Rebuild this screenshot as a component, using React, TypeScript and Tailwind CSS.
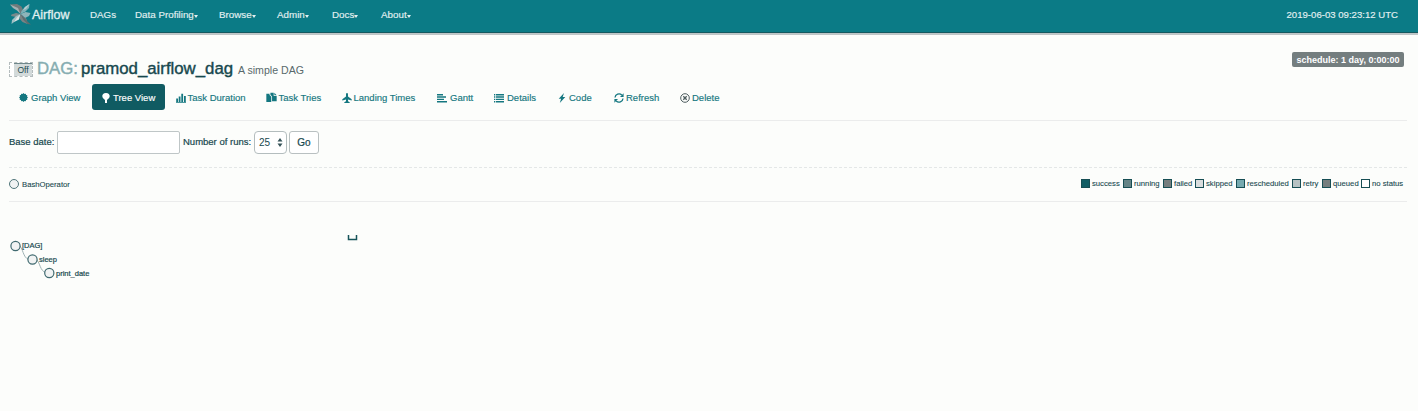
import type { ReactNode } from 'react';

function Pinwheel() {
  return (
    <svg className="h-[22px] w-[23px] shrink-0" viewBox="0 0 23 22">
      <path d="M1 1.500L8 1l4.500 2.500L14 7l-2.500 4L8 6 3 3.500z" fill="#717b7c" />
      <path d="M1 1.500L4 5l4 2.500 3.500 3.500L9 5z" fill="#a3b1b3" />
      <path d="M20.500 1L16 4l-3.500 4-1 3 5-2.500L20 5z" fill="#7fb0b6" />
      <path d="M20.500 1L16 4l-2 3 3-1z" fill="#b5cccf" />
      <path d="M11.500 11l5-2 5 1-1.500 3-4 2z" fill="#8eb5ba" />
      <path d="M11.500 11L7 10l-4.500 1.500L2 13l5 1z" fill="#79898b" />
      <path d="M11.500 11L7 13l-4 4-.5 4L7 17.500z" fill="#9fc0c4" />
      <path d="M11.500 11L8 14.500 5 19l5-2.500z" fill="#dde3e3" />
      <path d="M11.500 11l-1 4.500 3 3.500 5 2-1-5z" fill="#7a8485" />
      <path d="M11.500 11l4 4 3.500 4 3 2.500-3.500-.5-4-4z" fill="#5d6d6f" />
    </svg>
  );
}

function Svg({ children, className }: { children: ReactNode; className: string }) {
  return (
    <svg viewBox="0 0 10 10" fill="currentColor" className={className}>
      {children}
    </svg>
  );
}

const menus = [
  { label: 'DAGs', caret: false, box: 'w-[45px]' },
  { label: 'Data Profiling', caret: true, box: 'w-[84px]' },
  { label: 'Browse', caret: true, box: 'w-[58px]' },
  { label: 'Admin', caret: true, box: 'w-[55px]' },
  { label: 'Docs', caret: true, box: 'w-[49px]' },
  { label: 'About', caret: true, box: 'w-[50px]' },
];

const tabs: { label: string; box: string; icon: ReactNode }[] = [
  {
    label: 'Graph View',
    box: 'w-[82.500px] pl-[10px]',
    icon: (
      <Svg className="mr-[3px] size-[9px]">
        <path d="M5 0l1.1 1.1L7.5.7l.4 1.4 1.4.4-.4 1.4L10 5 8.9 6.1l.4 1.4-1.4.4-.4 1.4-1.4-.4L5 10 3.9 8.9l-1.4.4-.4-1.4-1.4-.4.4-1.4L0 5l1.1-1.1L.7 2.500l1.400-.4.4-1.400 1.400.4z" />
      </Svg>
    ),
  },
  {
    label: 'Tree View',
    box: 'w-[73px] pl-[9.500px]',
    icon: (
      <Svg className="mr-[2px] size-[10px]">
        <path d="M5 0C7.600 0 8.700 1.500 8.700 3.100 8.700 5 7.400 6 6 6.900V10H4V6.900C2.600 6 1.300 5 1.300 3.100 1.300 1.500 2.400 0 5 0z" />
      </Svg>
    ),
  },
  {
    label: 'Task Duration',
    box: 'w-[92px] pl-[11px]',
    icon: (
      <Svg className="mr-[2px] size-[10px]">
        <path d="M.2 5.500h1.800V9H.2zM2.700 3.500h1.800V9H2.700zM5.300 .8h1.800V9H5.300zM8 3h1.800v6H8zM0 9h10v.7H0z" />
      </Svg>
    ),
  },
  {
    label: 'Task Tries',
    box: 'w-[75px] pl-[9px]',
    icon: (
      <Svg className="mr-[2px] size-[11px]">
        <path d="M.3 1.500h2.900v1.300l1.600 1.600V9H.3zM4 .7h3v2.900h2.700V8.300H5.500V4L4 2.500zM7.600.7l2.100 2.300H7.600z" />
      </Svg>
    ),
  },
  {
    label: 'Landing Times',
    box: 'w-[95.500px] pl-[10px]',
    icon: (
      <Svg className="mr-[2px] size-[10px]">
        <path d="M5 0c.7 0 1 .7 1 1.400v2.200l3.700 2.700v1.300L6 6.600v1.600l1.700 1v.8H2.300v-.8l1.700-1V6.600L.3 7.600V6.300L4 3.600V1.400C4 .7 4.300 0 5 0z" />
      </Svg>
    ),
  },
  {
    label: 'Gantt',
    box: 'w-[57px] pl-[10px]',
    icon: (
      <Svg className="mr-[3px] size-[10px]">
        <path d="M0 1h6v1.400H0zM0 3.300h9v1.400H0zM0 5.700h7v1.400H0zM0 8.100h10v1.400H0z" />
      </Svg>
    ),
  },
  {
    label: 'Details',
    box: 'w-[63px] pl-[10px]',
    icon: (
      <Svg className="mr-[3px] size-[10px]">
        <path d="M0 1h1.300v1.400H0zM2 1h8v1.400H2zM0 3.300h1.300v1.400H0zM2 3.300h8v1.400H2zM0 5.700h1.300v1.400H0zM2 5.700h8v1.400H2zM0 8.100h1.300v1.400H0zM2 8.100h8v1.400H2z" />
      </Svg>
    ),
  },
  {
    label: 'Code',
    box: 'w-[56.500px] pl-[9.500px]',
    icon: (
      <Svg className="mr-[2.500px] size-[10px]">
        <path d="M7 0L1.700 5.700h2.400L2.800 10l5.500-5.900H5.700z" />
      </Svg>
    ),
  },
  {
    label: 'Refresh',
    box: 'w-[66.500px] pl-[10px]',
    icon: (
      <Svg className="mr-[2.500px] size-[10px]">
        <path d="M1 4.500A4 4 0 0 1 7.800 2M9 5.500A4 4 0 0 1 2.200 8" fill="none" stroke="currentColor" strokeWidth="1.300" />
        <path d="M9.600.2v3.800H6zM.4 9.800V6H4z" />
      </Svg>
    ),
  },
  {
    label: 'Delete',
    box: 'w-[60px] pl-[9.500px]',
    icon: (
      <Svg className="mr-[2.500px] size-[10px] text-[#4d5c5e]">
        <circle cx="5" cy="5" r="4.300" fill="none" stroke="currentColor" strokeWidth="1" />
        <path d="M3.300 3.300l3.400 3.400M6.700 3.300L3.300 6.700" stroke="currentColor" strokeWidth="1.300" />
      </Svg>
    ),
  },
];

const statuses = [
  { label: 'success', box: 'w-[42px]', fill: 'bg-[#125e65]' },
  { label: 'running', box: 'w-[40px]', fill: 'bg-[#668486]' },
  { label: 'failed', box: 'w-[32px]', fill: 'bg-[#777e7e]' },
  { label: 'skipped', box: 'w-[41px]', fill: 'bg-[#d9dddd]' },
  { label: 'rescheduled', box: 'w-[56px]', fill: 'bg-[#76aab0]' },
  { label: 'retry', box: 'w-[30px]', fill: 'bg-[#b7c2c3]' },
  { label: 'queued', box: 'w-[39px]', fill: 'bg-[#777e7e]' },
  { label: 'no status', box: 'w-[42px]', fill: 'bg-white' },
];

export default function App() {
  return (
    <div className="h-[411px] overflow-hidden bg-[#fcfdfb] font-['Liberation_Sans',Arial,sans-serif] text-[9.500px] leading-[12px] text-[#17484e]">
      <nav className="flex h-[35px] items-start border-b-2 border-[#bfc6c7] bg-[#0b7b86]">
        <div className="flex h-[33px] w-full items-start border-b border-[#155960] pt-[3px] pl-[9px] text-[9.800px] text-[#e2f0f1] [-webkit-text-stroke:0.15px]">
          <Pinwheel />
          <span className="mt-[5px] w-[58px] text-[12.500px] leading-[14px] [-webkit-text-stroke:0.3px]">Airflow</span>
          {menus.map((m) => (
            <span key={m.label} className={`mt-[6px] flex shrink-0 items-center whitespace-nowrap ${m.box}`}>
              {m.label}
              {m.caret && <span className="mt-[2px] border-x-[2.500px] border-t-[3px] border-x-transparent" />}
            </span>
          ))}
          <span className="mt-[6px] mr-[20px] ml-auto text-[9.600px] whitespace-nowrap">2019-06-03 09:23:12 UTC</span>
        </div>
      </nav>

      <div className="pr-[11px] pl-[9px]">
        <header className="flex h-[49px] justify-between">
          <div className="flex pt-[24px]">
            <span className="mt-[3px] flex h-[15px] w-[24px] shrink-0 items-center border border-dashed border-[#b4bcbd] bg-white pl-[4px]">
              <span className="flex h-[13px] w-[18px] items-center justify-center border-t border-[#70888b] bg-[#d3dada] pb-px text-[8.500px] text-[#234c50]">Off</span>
            </span>
            <h1 className="ml-[4px] text-[16.800px] leading-[20px] whitespace-nowrap [-webkit-text-stroke:0.4px]">
              <span className="inline-block w-[44px] text-[#86adb1]">DAG:</span>
              <span className="inline-block w-[157px]">pramod_airflow_dag</span>
            </h1>
            <span className="mt-[5px] text-[10.600px] leading-[13px] whitespace-nowrap text-[#58696b]">A simple DAG</span>
          </div>
          <span className="mt-[17px] mr-[3px] flex h-[15px] w-[112px] items-center justify-center rounded-[2px] bg-[#747e7f] text-[9px] font-bold whitespace-nowrap text-white">
            schedule: 1 day, 0:00:00
          </span>
        </header>

        <ul className="flex h-[37px] border-b border-[#ebecec]">
          {tabs.map((t) => (
            <li
              key={t.label}
              className={`flex h-[26px] shrink-0 items-center pt-px whitespace-nowrap [-webkit-text-stroke:0.15px] ${t.box} ${
                t.label === 'Tree View' ? 'rounded-[3px] bg-[#105b62] text-white' : 'text-[#147780]'
              }`}
            >
              {t.icon}
              {t.label}
            </li>
          ))}
        </ul>

        <form className="flex h-[47px] border-b border-dashed border-[#e4e7e7] pt-[10px]">
          <label className="mt-[5px] w-[48px] whitespace-nowrap [-webkit-text-stroke:0.2px]">Base date:</label>
          <span className="h-[23px] w-[123px] rounded-[2px] border border-[#bfc6c7] bg-white" />
          <label className="mt-[5px] ml-[3px] w-[71px] whitespace-nowrap [-webkit-text-stroke:0.2px]">Number of runs:</label>
          <span className="flex h-[23px] w-[33px] items-center rounded-[4px] border border-[#b4bdbe] bg-white pl-[4px] text-[10px]">
            <span className="w-[18px]">25</span>
            <svg className="h-[9px] w-[6px]" viewBox="0 0 6 9" fill="#355257">
              <path d="M3 0l2.500 3.500h-5zM3 9L.5 5.500h5z" />
            </svg>
          </span>
          <button type="button" className="ml-[2px] h-[23px] w-[30px] rounded-[3px] border border-[#b9c0c1] bg-white pt-px text-[10px] [-webkit-text-stroke:0.2px]">
            Go
          </button>
        </form>

        <div className="flex h-[34px] items-start border-b border-[#ebecec] text-[7.700px] leading-[9px] [-webkit-text-stroke:0.1px]">
          <span className="mt-[11px] mr-[3px] size-[10px] rounded-full border border-[#50757a] bg-[#f1f3f3]" />
          <span className="mt-[12px]">BashOperator</span>
          <div className="mt-[11px] ml-auto flex h-[9px] w-[326px] items-center">
            {statuses.map((s) => (
              <span key={s.label} className={`flex shrink-0 items-center whitespace-nowrap ${s.box}`}>
                <span className={`mr-[2px] size-[9px] shrink-0 border border-[#174e54] ${s.fill}`} />
                {s.label}
              </span>
            ))}
          </div>
        </div>
      </div>

      <svg className="block h-[100px] w-full text-[7.500px]" viewBox="0 0 1418 100" fill="#17484e">
        <path d="M20 44C24 49 23 58 32 58M37 58C41 63 40 71 49 71" fill="none" stroke="#9fb3b5" />
        <g fill="#f1f3f3" stroke="#3f696f" strokeWidth="1.200">
          <circle cx="15.500" cy="44" r="4.600" />
          <circle cx="32.500" cy="57.500" r="4.600" />
          <circle cx="49.300" cy="71" r="4.600" />
        </g>
        <g stroke="#17484e" strokeWidth="0.200">
          <text x="22" y="46.400">[DAG]</text>
          <text x="39" y="60.200">sleep</text>
          <text x="56" y="74">print_date</text>
        </g>
        <path d="M348.500 33v4.500h8V33" fill="none" stroke="#17545a" strokeWidth="1.500" />
      </svg>
    </div>
  );
}
